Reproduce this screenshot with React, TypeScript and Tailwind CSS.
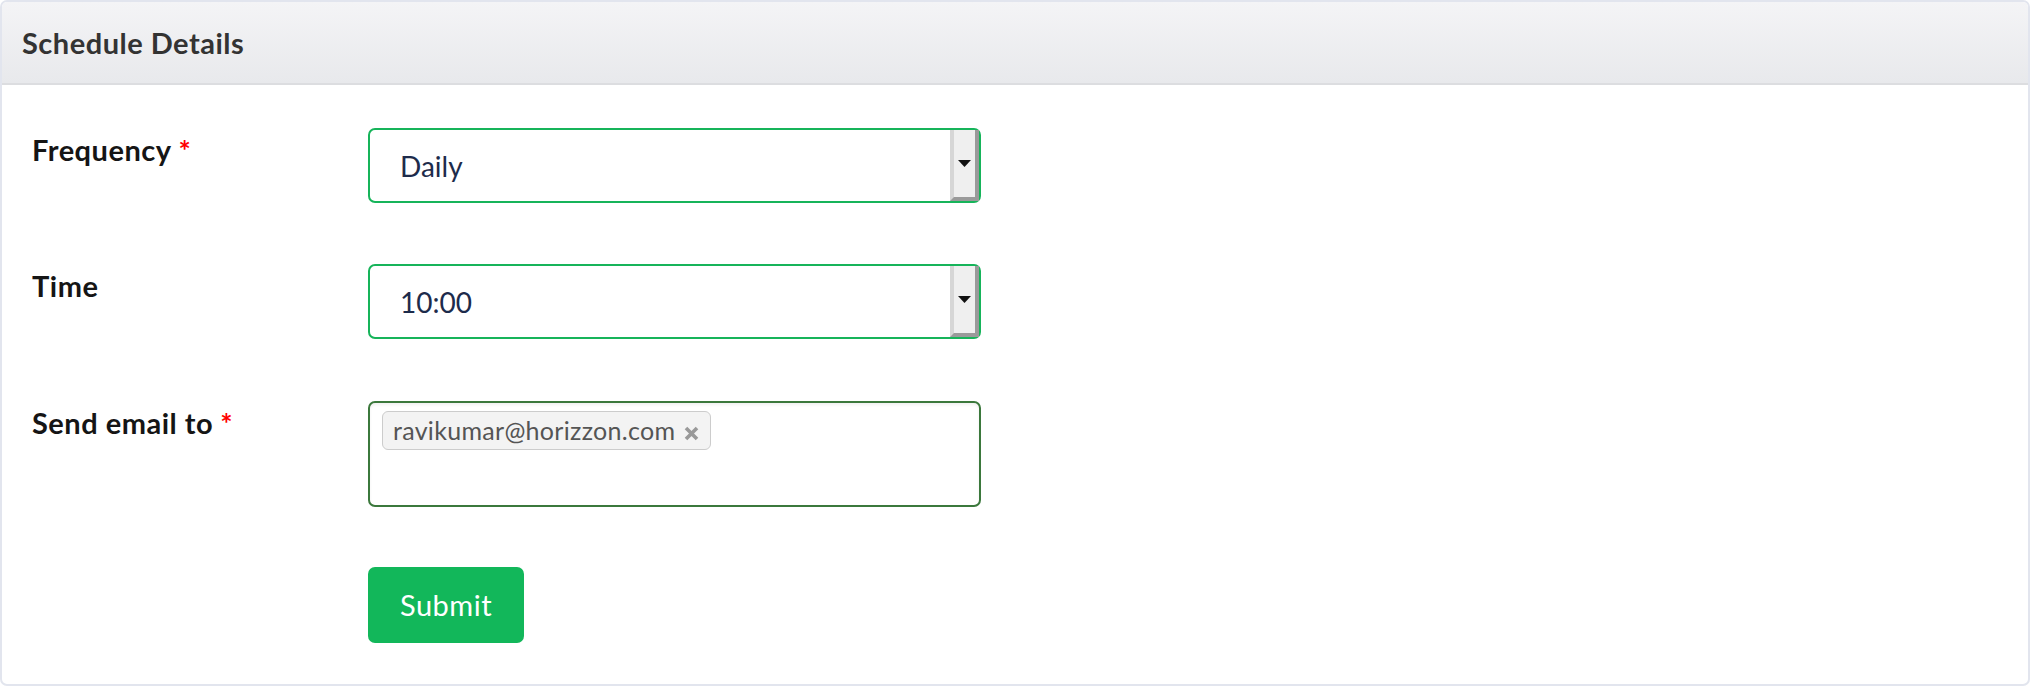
import type { JSX } from "react";

const FONT = { fontFamily: "Lato, 'Open Sans', sans-serif" };

/**
 * 旧式のスクロール矢印ボタン（セレクト右端）
 */
const ScrollArrow = (): JSX.Element => (
  <div className="flex h-[71px] w-[29px] shrink-0 items-center justify-center border-l-4 border-r-4 border-b-4 border-l-[#d6d6d6] border-r-[#9a9a9a] border-b-[#9a9a9a] bg-[#efefef]">
    <svg width="13" height="7" viewBox="0 0 13 7" aria-hidden="true">
      <path d="M0 0h13L6.5 7z" fill="#111" />
    </svg>
  </div>
);

const Required = (): JSX.Element => <span className="ml-[7px] text-[#ff0000]">*</span>;

const Label = ({ text, required }: { text: string; required?: boolean }): JSX.Element => (
  <div className="w-[366px] shrink-0 pl-[30px] pt-[2px] text-[29px] font-bold leading-[40px] tracking-[0.5px] text-[#151515]">
    {text}
    {required && <Required />}
  </div>
);

const SelectBox = ({ value }: { value: string }): JSX.Element => (
  <div className="flex h-[75px] w-[613px] items-center rounded-[7px] border-2 border-[#16b45a] bg-white">
    <span className="flex-1 pl-[30px] text-[28px] text-[#1d2b4b]">{value}</span>
    <ScrollArrow />
  </div>
);

export default function App(): JSX.Element {
  return (
    <div className="h-[686px] w-[2030px] bg-white" style={FONT}>
      <div className="flex h-full flex-col overflow-hidden rounded-[7px] border-2 border-[#e2e5ee]">
        <div className="flex h-[83px] shrink-0 items-center border-b-2 border-[#dcdde0] bg-gradient-to-b from-[#f4f4f6] to-[#e8e9ec] px-[20px]">
          <h2 className="text-[29px] font-bold tracking-[0.5px] text-[#333333]">Schedule Details</h2>
        </div>

        <div className="flex flex-1 flex-col pt-[43px]">
          <div className="flex items-start">
            <Label text="Frequency" required />
            <SelectBox value="Daily" />
          </div>

          <div className="mt-[61px] flex items-start">
            <Label text="Time" />
            <SelectBox value="10:00" />
          </div>

          <div className="mt-[62px] flex items-start">
            <Label text="Send email to" required />
            <div className="h-[106px] w-[613px] rounded-[7px] border-2 border-[#3b783c] bg-white px-[12px] pt-[8px] shadow-[inset_0_2px_3px_rgba(0,0,0,0.06)]">
              <span className="inline-flex h-[39px] items-center rounded-[6px] border border-[#cccccc] bg-[#f3f3f3] pl-[10px] pr-[11px] text-[25px] tracking-[0.3px] text-[#555555]">
                ravikumar@horizzon.com
                <svg className="ml-[9px] mt-[5px]" width="15" height="15" viewBox="0 0 15 15" aria-hidden="true">
                  <path d="M2 2l11 11M13 2L2 13" stroke="#999" strokeWidth="3.6" strokeLinecap="butt" />
                </svg>
              </span>
            </div>
          </div>

          <div className="mt-[60px] flex">
            <div className="w-[366px] shrink-0" />
            <button className="h-[76px] w-[156px] rounded-[7px] bg-[#12b75a] text-[29px] tracking-[0.5px] text-white">
              Submit
            </button>
          </div>
        </div>
      </div>
    </div>
  );
}
